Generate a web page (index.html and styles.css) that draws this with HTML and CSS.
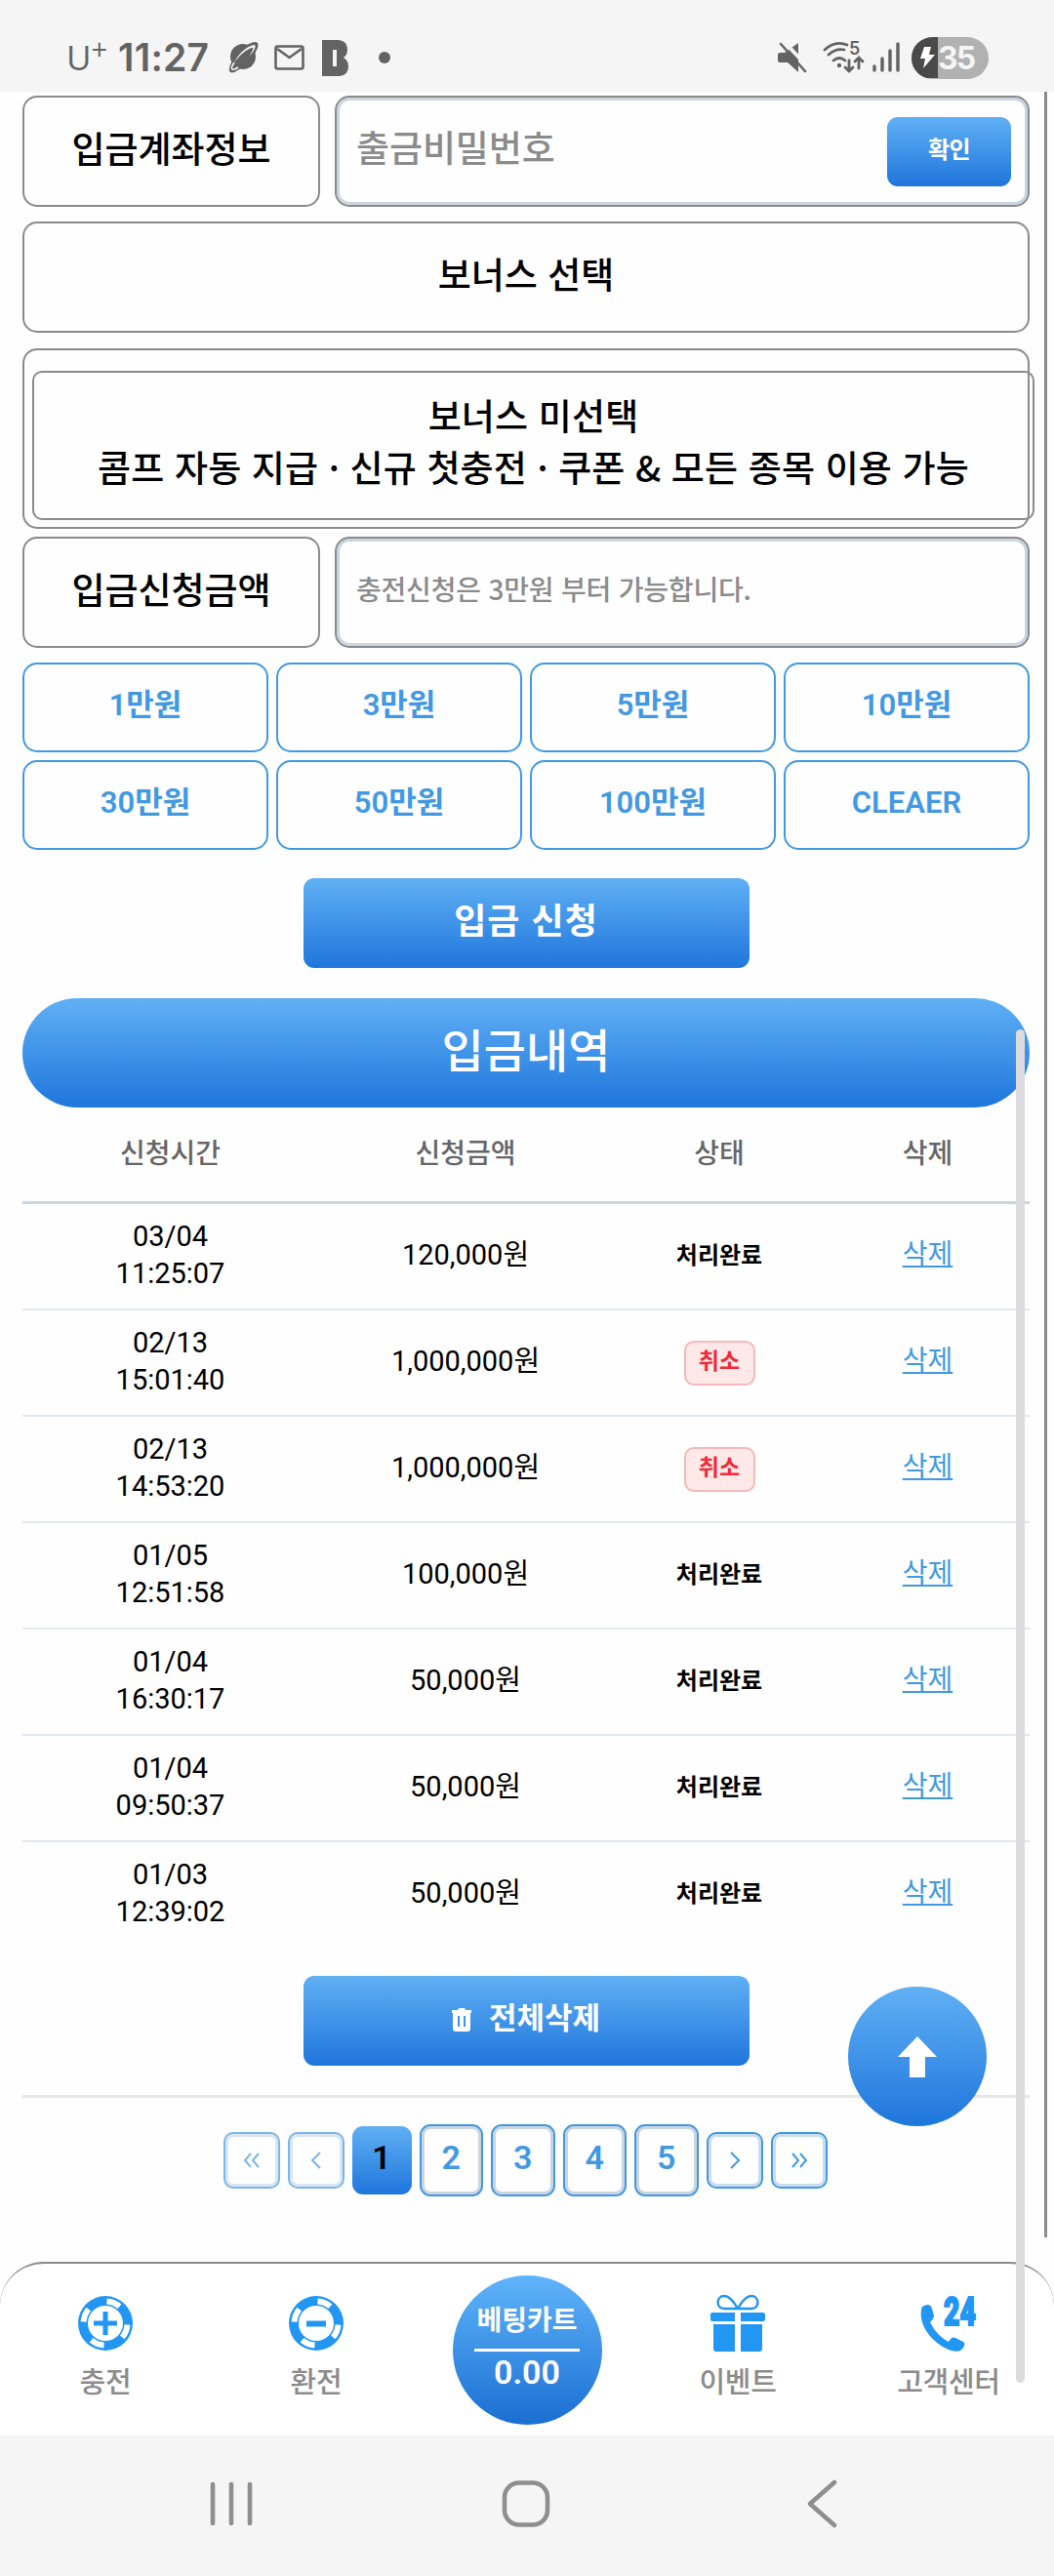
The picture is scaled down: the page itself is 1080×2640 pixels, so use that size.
FILE: index.html
```
<!DOCTYPE html>
<html lang="ko">
<head>
    <meta charset="UTF-8">
    <meta name="viewport" content="width=device-width, initial-scale=1.0">
    <title>입금신청</title>
    <link rel="stylesheet" href="styles.css">
</head>
<body>
    <div class="status-bar">
        <div class="status-left">
            <span class="carrier">U<sup>+</sup></span>
            <span class="clock">11:27</span>
            <svg class="ico-planet" width="32" height="34" viewBox="0 0 32 34">
                <circle cx="16" cy="16" r="13" fill="#636363"/>
                <path d="M3 32C-1 29 6 17 13 10S28-1 31 2c2 5-4 13-11 20S6 34 3 32z" fill="#636363"/>
                <path d="M7 22C12 12 22 4 28 4c2 2-2 8-6 12C26 10 27 7 26 7 21 7 12 15 7 22z" fill="#f5f5f5"/>
                <path d="M7 22q-4 6-2 7 2 1 6-2" fill="none" stroke="#f5f5f5" stroke-width="1.600"/>
            </svg>
            <svg class="ico-mail" width="31" height="26" viewBox="0 0 31 26">
                <rect x="1.500" y="1.500" width="28" height="23" rx="2" fill="none" stroke="#636363" stroke-width="2.600"/>
                <path d="M3 4l12.500 9L28 4" fill="none" stroke="#636363" stroke-width="2.600"/>
            </svg>
            <svg class="ico-b" width="27" height="37" viewBox="0 0 27 37">
                <path d="M0 0h17q9 1 9 10 0 5-4 8 5 3 5 9 0 9-9 10H0z" fill="#636363"/>
                <path d="M11 10h4v17h-4z" fill="#f5f5f5"/>
            </svg>
            <span class="status-dot"></span>
        </div>
        <div class="status-right">
            <svg width="30" height="32" viewBox="0 0 30 32">
                <path d="M0 13q0-2 2-2h5L21 1v30L10 21H2q-2 0-2-2z" fill="#636363"/>
                <path d="M4-3l28 30" stroke="#f5f5f5" stroke-width="4"/>
                <path d="M3 2l25 28" stroke="#636363" stroke-width="2.600" stroke-linecap="round"/>
            </svg>
            <svg class="ico-wifi" width="42" height="34" viewBox="0 0 42 34">
                <g fill="none" stroke="#636363" stroke-width="2.800" stroke-linecap="round">
                    <path d="M2 9Q13-1 25 4M6 14q8-7 16-5M11 20q6-5 12 0"/>
                    <path d="M27 20v11m-4-4l4 4 4-4M37 28V17m-4 4l4-4 4 4"/>
                </g>
                <circle cx="17" cy="25" r="2.200" fill="#636363"/>
                <text x="27" y="14" class="wifi-num">5</text>
            </svg>
            <svg class="ico-signal" width="28" height="32" viewBox="0 0 28 32">
                <path d="M2 25v4M10 17v12M18 9v20M26 2v27" stroke="#636363" stroke-width="3.400" stroke-linecap="round"/>
            </svg>
            <div class="battery">
                <svg width="27" height="42" viewBox="0 0 27 42">
                    <path d="M0 0h27v42H0z" fill="#4a4a4a"/>
                    <path d="M13 10h7l-2 8h6L12 32l2-10H9z" fill="#fff"/>
                </svg>
                <span>35</span>
            </div>
        </div>
    </div>

    <main class="content">
        <div class="form-row">
            <div class="form-label">입금계좌정보</div>
            <div class="form-field">
                <span class="placeholder">출금비밀번호</span>
                <button type="button" class="confirm-btn">확인</button>
            </div>
        </div>
        <div class="form-label bonus-title">보너스 선택</div>
        <div class="bonus-box">
            <div class="bonus-item">보너스 미선택<br>콤프 자동 지급 · 신규 첫충전 · 쿠폰 &amp; 모든 종목 이용 가능</div>
        </div>
        <div class="form-row">
            <div class="form-label">입금신청금액</div>
            <div class="form-field">
                <span class="placeholder small">충전신청은 3만원 부터 가능합니다.</span>
            </div>
        </div>

        <div class="amount-grid">
            <button type="button">1만원</button>
            <button type="button">3만원</button>
            <button type="button">5만원</button>
            <button type="button">10만원</button>
            <button type="button">30만원</button>
            <button type="button">50만원</button>
            <button type="button">100만원</button>
            <button type="button">CLEAER</button>
        </div>

        <button type="button" class="main-btn submit-btn">입금 신청</button>

        <h2 class="history-title">입금내역</h2>
        <table class="history">
            <colgroup><col class="c-time"><col class="c-amount"><col class="c-status"><col class="c-del"></colgroup>
            <thead>
                <tr><th>신청시간</th><th>신청금액</th><th>상태</th><th>삭제</th></tr>
            </thead>
            <tbody>
                <tr><td>03/04<br>11:25:07</td><td>120,000원</td><td><span class="done">처리완료</span></td><td><a href="#">삭제</a></td></tr>
                <tr><td>02/13<br>15:01:40</td><td>1,000,000원</td><td><span class="cancel">취소</span></td><td><a href="#">삭제</a></td></tr>
                <tr><td>02/13<br>14:53:20</td><td>1,000,000원</td><td><span class="cancel">취소</span></td><td><a href="#">삭제</a></td></tr>
                <tr><td>01/05<br>12:51:58</td><td>100,000원</td><td><span class="done">처리완료</span></td><td><a href="#">삭제</a></td></tr>
                <tr><td>01/04<br>16:30:17</td><td>50,000원</td><td><span class="done">처리완료</span></td><td><a href="#">삭제</a></td></tr>
                <tr><td>01/04<br>09:50:37</td><td>50,000원</td><td><span class="done">처리완료</span></td><td><a href="#">삭제</a></td></tr>
                <tr><td>01/03<br>12:39:02</td><td>50,000원</td><td><span class="done">처리완료</span></td><td><a href="#">삭제</a></td></tr>
            </tbody>
        </table>

        <button type="button" class="main-btn delete-btn">
            <svg width="20" height="24" viewBox="0 0 20 24">
                <path d="M0 2h6l1-2h6l1 2h6v3H0z" fill="#fff"/>
                <path fill-rule="evenodd" d="M1 5h18v16q0 3-3 3H4q-3 0-3-3zM6 8v11h2V8zm6 0v11h2V8z" fill="#fff"/>
            </svg>
            전체삭제
        </button>

        <div class="pagination">
            <button type="button" class="page-arrow off"><svg width="20" height="18" viewBox="0 0 20 18"><path d="M9 2L3 9l6 7M17 2l-6 7 6 7"/></svg></button>
            <button type="button" class="page-arrow off"><svg width="20" height="18" viewBox="0 0 20 18"><path d="M14 1L6 9l8 8"/></svg></button>
            <button type="button" class="page active">1</button>
            <button type="button" class="page">2</button>
            <button type="button" class="page">3</button>
            <button type="button" class="page">4</button>
            <button type="button" class="page">5</button>
            <button type="button" class="page-arrow"><svg width="20" height="18" viewBox="0 0 20 18"><path d="M6 1l8 8-8 8"/></svg></button>
            <button type="button" class="page-arrow"><svg width="20" height="18" viewBox="0 0 20 18"><path d="M3 2l6 7-6 7M11 2l6 7-6 7"/></svg></button>
        </div>
    </main>

    <nav class="bottom-nav">
        <a href="#" class="nav-item">
            <svg width="56" height="56" viewBox="0 0 56 56">
                <circle cx="28" cy="28" r="28" fill="#2196f3"/>
                <circle cx="28" cy="28" r="22.500" fill="none" stroke="#fff" stroke-width="6" pathLength="360" stroke-dasharray="36 54" stroke-dashoffset="86"/>
                <circle cx="28" cy="28" r="18" fill="#fff"/>
                <path d="M28 16v24M16 28h24" stroke="#2196f3" stroke-width="5"/>
            </svg>
            <span>충전</span>
        </a>
        <a href="#" class="nav-item">
            <svg width="56" height="56" viewBox="0 0 56 56">
                <circle cx="28" cy="28" r="28" fill="#2196f3"/>
                <circle cx="28" cy="28" r="22.500" fill="none" stroke="#fff" stroke-width="6" pathLength="360" stroke-dasharray="36 54" stroke-dashoffset="86"/>
                <circle cx="28" cy="28" r="18" fill="#fff"/>
                <path d="M18 28.500h20" stroke="#2196f3" stroke-width="6"/>
            </svg>
            <span>환전</span>
        </a>
        <a href="#" class="cart">
            <span class="cart-name">베팅카트</span>
            <span class="cart-odds">0.00</span>
        </a>
        <a href="#" class="nav-item">
            <svg width="58" height="58" viewBox="0 0 58 58">
                <path d="M29 14C24 5 20 1 15 1c-8 0-9 13 0 13zM29 14c5-9 9-13 14-13 8 0 9 13 0 13z" fill="none" stroke="#2196f3" stroke-width="2.400"/>
                <path d="M3 18h23v9H3q-2 0-2-2v-5q0-2 2-2zM32 18h23q2 0 2 2v5q0 2-2 2H32zM4 30h22v28H7q-3 0-3-3zM32 30h22v25q0 3-3 3H32z" fill="#2196f3"/>
            </svg>
            <span>이벤트</span>
        </a>
        <a href="#" class="nav-item">
            <svg width="58" height="58" viewBox="0 0 58 58">
                <path d="M2 12q8-5 10 2l2 7q0 3-4 7 7 14 19 20 3-6 7-4l8 4q2 1 1 4-3 8-13 5C16 52-2 34 1 15z" fill="#2196f3"/>
                <text x="24" y="31" class="num24" textLength="33" lengthAdjust="spacingAndGlyphs">24</text>
            </svg>
            <span>고객센터</span>
        </a>
    </nav>

    <div class="system-nav">
        <svg width="44" height="46" viewBox="0 0 44 46"><path d="M3 3v40M22 3v40M41 3v40"/></svg>
        <svg class="sys-home" width="50" height="48" viewBox="0 0 50 48"><rect x="3" y="2.500" width="44" height="43" rx="15"/></svg>
        <svg class="sys-back" width="30" height="50" viewBox="0 0 30 50"><path d="M28 3L3 25l25 22"/></svg>
    </div>

    <a href="#" class="top-btn">
        <svg width="40" height="42" viewBox="0 0 40 42"><path d="M20 0l20 21H28v21H12V21H0z" fill="#fff"/></svg>
    </a>
    <div class="side-line"></div>
    <div class="scroll-thumb"></div>
</body>
</html>
```

FILE: styles.css
```
* {
    margin: 0;
    padding: 0;
    box-sizing: border-box;
}

body {
    position: relative;
    width: 1080px;
    height: 2640px;
    display: flex;
    flex-direction: column;
    overflow: hidden;
    background: #fefefe;
    color: #000;
    font-family: "Noto Sans CJK KR", sans-serif;
}

button {
    font-family: inherit;
    border: none;
    background: none;
    cursor: pointer;
}

svg {
    overflow: visible;
}

a {
    color: #4299e1;
}

.status-bar {
    height: 94px;
    padding: 24px 67px 0 68px;
    display: flex;
    justify-content: space-between;
    align-items: center;
    background: #f5f5f5;
    color: #636363;
    font-family: Inter, sans-serif;
    flex: none;
}

.status-left,
.status-right {
    display: flex;
    align-items: center;
}

.carrier {
    width: 53px;
    font-family: "Open Sans", sans-serif;
    font-size: 35px;
    font-weight: 400;
    line-height: 40px;
}

.carrier sup {
    font-size: 29px;
    line-height: 0;
    vertical-align: 11px;
}

.clock {
    width: 112px;
    font-size: 39px;
    font-weight: 600;
    line-height: 40px;
    letter-spacing: 0.2px;
    white-space: nowrap;
}

.ico-mail {
    margin-left: 16px;
}

.ico-b {
    margin-left: 18px;
}

.status-dot {
    width: 12px;
    height: 12px;
    margin-left: 31px;
    border-radius: 50%;
    background: #636363;
}

.ico-wifi {
    margin-left: 16px;
}

.wifi-num {
    font-size: 18px;
    font-weight: 600;
    fill: #636363;
}

.ico-signal {
    margin-left: 9px;
}

.battery {
    width: 79px;
    height: 43px;
    margin-left: 12px;
    display: flex;
    align-items: center;
    overflow: hidden;
    border-radius: 22px;
    background: #b1b1b1;
    color: #f5f5f5;
    font-size: 32px;
    font-weight: 700;
    letter-spacing: -2px;
}

.content {
    flex: 1;
    padding: 4px 25px 0 23px;
    display: flex;
    flex-direction: column;
}

.form-row {
    display: grid;
    grid-template-columns: 305px 1fr;
    gap: 15px;
}

.form-label {
    height: 114px;
    padding-bottom: 9px;
    display: flex;
    align-items: center;
    justify-content: center;
    border: 2px solid #8b8b8b;
    border-radius: 15px;
    font-size: 37px;
    font-weight: 500;
}

.form-field {
    height: 114px;
    padding: 0 17px 0 20px;
    display: flex;
    align-items: center;
    justify-content: space-between;
    border: 2px solid #8b8b8b;
    border-radius: 15px;
    box-shadow: inset 0 0 0 3px #cbd5e0;
}

.placeholder {
    padding-bottom: 10px;
    color: #8b8b8b;
    font-size: 37px;
    font-weight: 500;
    letter-spacing: -0.1px;
}

.placeholder.small {
    padding-bottom: 8px;
    font-size: 28px;
    letter-spacing: -0.2px;
}

.confirm-btn {
    width: 127px;
    height: 71px;
    padding-bottom: 7px;
    border-radius: 11px;
    background: linear-gradient(#60b0f4, #1f76dc);
    color: #fff;
    font-size: 24px;
    font-weight: 700;
    letter-spacing: -0.7px;
}

.bonus-title {
    margin-top: 15px;
}

.bonus-box {
    height: 185px;
    margin: 16px 0 8px;
    padding: 21px 0 0 8px;
    border: 2px solid #8b8b8b;
    border-radius: 15px;
}

.bonus-item {
    width: 1027px;
    height: 153px;
    padding-top: 17px;
    border: 2px solid #8b8b8b;
    border-radius: 10px;
    font-size: 37px;
    font-weight: 500;
    line-height: 53px;
    letter-spacing: 0.15px;
    text-align: center;
    white-space: nowrap;
}

.amount-grid {
    margin-top: 15px;
    display: grid;
    grid-template-columns: repeat(4, 1fr);
    gap: 8px;
}

.amount-grid button {
    height: 92px;
    padding-bottom: 5px;
    border: 2px solid #4299e1;
    border-radius: 15px;
    color: #4299e1;
    font-family: Roboto, "Noto Sans CJK KR", sans-serif;
    font-size: 31px;
    font-weight: 600;
    line-height: 44px;
}

.main-btn {
    width: 457px;
    height: 92px;
    margin: 0 auto;
    padding-bottom: 11px;
    display: flex;
    align-items: center;
    justify-content: center;
    flex: none;
    border-radius: 11px;
    background: linear-gradient(#60b0f4, #1f76dc);
    color: #fff;
    font-weight: 700;
}

.submit-btn {
    margin-top: 29px;
    font-size: 36px;
    letter-spacing: 1px;
}

.history-title {
    height: 112px;
    margin-top: 31px;
    padding-bottom: 11px;
    display: flex;
    align-items: center;
    justify-content: center;
    flex: none;
    border-radius: 56px;
    background: linear-gradient(#60b0f4, #1f76dc);
    color: #fff;
    font-size: 47px;
    font-weight: 500;
}

.history {
    width: 100%;
    table-layout: fixed;
    border-collapse: separate;
    border-spacing: 0;
    text-align: center;
    font-size: 28px;
    line-height: 38px;
}

.c-time { width: 303px; }
.c-amount { width: 302px; }
.c-status { width: 218px; }

.history th {
    height: 99px;
    padding-bottom: 6px;
    border-bottom: 3px solid #cbd5e0;
    color: #666;
    font-weight: 500;
}

.history td {
    height: 109px;
    padding-bottom: 4px;
    border-bottom: 2px solid #e2e8f0;
    font-family: Roboto, "Noto Sans CJK KR", sans-serif;
    font-size: 29px;
}

.history td a {
    font-size: 28px;
}

.history tr:last-child td {
    border-bottom-color: transparent;
}

.done {
    font-size: 24px;
    font-weight: 700;
}

.cancel {
    display: inline-block;
    width: 73px;
    height: 46px;
    margin-top: 5px;
    border: 2px solid #f6b8bc;
    border-radius: 10px;
    background: #fee8e8;
    color: #ef2b3a;
    font-family: "Noto Sans CJK KR", sans-serif;
    font-size: 23px;
    font-weight: 700;
    line-height: 35px;
    vertical-align: middle;
}

.delete-btn {
    gap: 18px;
    margin-top: 28px;
    font-size: 31px;
}

.delete-btn svg {
    margin-top: 9px;
}

.pagination {
    height: 104px;
    margin-top: 30px;
    padding: 27px 2px 0 0;
    display: flex;
    align-items: center;
    justify-content: center;
    gap: 8px;
    border-top: 3px solid #e5e7eb;
}

.page {
    width: 65.5px;
    height: 74px;
    padding-bottom: 6px;
    border: 2px solid #4299e1;
    border-radius: 11px;
    box-shadow: inset 0 0 0 3px #cbd5e0;
    color: #4299e1;
    font-family: Roboto, sans-serif;
    font-size: 34px;
    font-weight: 600;
    line-height: 40px;
}

.page.active {
    width: 61px;
    height: 70px;
    border: none;
    box-shadow: none;
    background: linear-gradient(#60b0f4, #1f76dc);
    color: #000;
}

.page-arrow {
    width: 58px;
    height: 58px;
    display: flex;
    align-items: center;
    justify-content: center;
    border: 2px solid #4299e1;
    border-radius: 10px;
    box-shadow: inset 0 0 0 3px #cbdcee;
}

.page-arrow.off {
    opacity: 0.7;
}

.page-arrow path {
    fill: none;
    stroke: #4299e1;
    stroke-width: 2;
}

.bottom-nav {
    height: 178px;
    display: grid;
    grid-template-columns: repeat(5, 1fr);
    flex: none;
    border-top: 2px solid #8b8b8b;
    border-radius: 45px 45px 0 0;
    background: #fff;
}

.nav-item {
    padding-top: 32px;
    display: flex;
    flex-direction: column;
    align-items: center;
    gap: 7px;
    color: #8b8b8b;
    font-size: 29px;
    font-weight: 500;
    text-decoration: none;
}

.nav-item svg {
    height: 58px;
}

.nav-item span {
    line-height: 44px;
    letter-spacing: -0.3px;
}

.num24 {
    fill: #2196f3;
    stroke: #2196f3;
    stroke-width: 2;
    font-family: Roboto, sans-serif;
    font-size: 41px;
    font-weight: 900;
}

.cart {
    width: 153px;
    height: 153px;
    margin: 12px auto 0;
    padding-top: 23px;
    display: flex;
    flex-direction: column;
    align-items: center;
    border-radius: 50%;
    background: linear-gradient(#60b4fa, #1a6fd2);
    color: #fff;
    font-weight: 700;
    text-decoration: none;
}

.cart-name {
    width: 108px;
    height: 55px;
    border-bottom: 3px solid #fff;
    font-size: 28px;
    line-height: 42px;
    text-align: center;
}

.cart-odds {
    font-family: Roboto, sans-serif;
    font-size: 34px;
    font-weight: 600;
    line-height: 42px;
}

.system-nav {
    height: 144px;
    padding: 0 0 4px 215px;
    display: flex;
    align-items: center;
    flex: none;
    background: #f5f5f5;
}

.system-nav svg {
    fill: none;
    stroke: #8e8e8e;
    stroke-width: 4.6;
    stroke-linecap: round;
    stroke-linejoin: round;
}

.sys-home {
    margin-left: 255px;
}

.sys-back {
    margin-left: 263px;
}

/* floating over the page */
.top-btn {
    position: absolute;
    left: 869px;
    top: 2036px;
    width: 142px;
    height: 143px;
    display: flex;
    align-items: center;
    justify-content: center;
    border-radius: 50%;
    background: linear-gradient(#60b0f4, #1f76dc);
}

.side-line {
    position: absolute;
    left: 1070px;
    top: 94px;
    width: 3px;
    height: 2199px;
    background: #8b8b8b;
}

.scroll-thumb {
    position: absolute;
    left: 1041px;
    top: 1055px;
    width: 9px;
    height: 1387px;
    border-radius: 5px;
    background: #dcdcde;
}
```
